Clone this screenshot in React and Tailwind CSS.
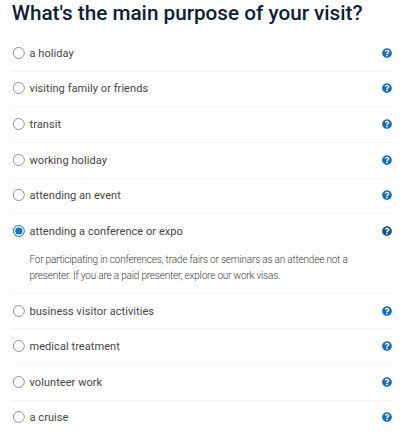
import { FaQuestionCircle } from "react-icons/fa";

const options = [
  "a holiday",
  "visiting family or friends",
  "transit",
  "working holiday",
  "attending an event",
  "attending a conference or expo",
  "business visitor activities",
  "medical treatment",
  "volunteer work",
  "a cruise",
];

function Radio({ checked }) {
  return (
    <svg viewBox="0 0 12 12" className="mb-px h-3 w-3 shrink-0" aria-hidden="true">
      <circle cx="5.8" cy="6" r="5.5" fill="white" stroke={checked ? "#0874d1" : "#808080"} strokeWidth={checked ? 1 : 0.85} />
      {checked && <circle cx="5.8" cy="6" r="3.6" fill="#0874d1" />}
    </svg>
  );
}

function Option({ label, checked }) {
  return (
    <li className="border-b border-[#f4f4f4] last:border-b-0">
      <div className="flex h-[34.64px] items-center pl-[2px] pr-[0.4px]">
        <Radio checked={checked} />
        <span className="ml-[4.5px] grow whitespace-nowrap pt-px text-[11px] leading-4 tracking-[0.06px] text-[#454545]">{label}</span>
        <FaQuestionCircle className={checked ? "mb-px h-[10px] w-[10px] text-[#0b51a0]" : "mb-px h-[10px] w-[10px] text-[#126bce]"} />
      </div>
      {checked && (
        <p className="h-[44px] whitespace-nowrap pl-[18.4px] pt-[3px] text-[10px] font-light leading-4 tracking-[-0.19px] text-[#3c3c3c]">
          For participating in conferences, trade fairs or seminars as an attendee not a
          <br />
          presenter. If you are a paid presenter, explore our work visas.
        </p>
      )}
    </li>
  );
}

export default function App() {
  return (
    <main className="h-[436px] w-[406px] overflow-hidden bg-white pl-[11px] pr-[14px] font-['Roboto',sans-serif]">
      <h1 className="h-[36px] whitespace-nowrap pl-[0.7px] text-[20.7px] font-medium leading-[26px] text-[#0f2138]">
        What's the main purpose of your visit?
      </h1>
      <ul>
        {options.map((label) => (
          <Option key={label} label={label} checked={label === "attending a conference or expo"} />
        ))}
      </ul>
    </main>
  );
}
